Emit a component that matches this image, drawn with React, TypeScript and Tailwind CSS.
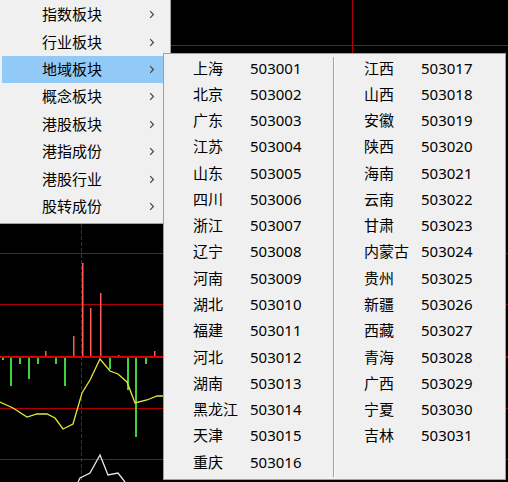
import type { ReactNode } from 'react';

const mainItems = ['指数板块', '行业板块', '地域板块', '概念板块', '港股板块', '港指成份', '港股行业', '股转成份'];

const regions: [string, string][] = [
    ['上海', '503001'], ['北京', '503002'], ['广东', '503003'], ['江苏', '503004'],
    ['山东', '503005'], ['四川', '503006'], ['浙江', '503007'], ['辽宁', '503008'],
    ['河南', '503009'], ['湖北', '503010'], ['福建', '503011'], ['河北', '503012'],
    ['湖南', '503013'], ['黑龙江', '503014'], ['天津', '503015'], ['重庆', '503016'],
    ['江西', '503017'], ['山西', '503018'], ['安徽', '503019'], ['陕西', '503020'],
    ['海南', '503021'], ['云南', '503022'], ['甘肃', '503023'], ['内蒙古', '503024'],
    ['贵州', '503025'], ['新疆', '503026'], ['西藏', '503027'], ['青海', '503028'],
    ['广西', '503029'], ['宁夏', '503030'], ['吉林', '503031'],
];

// bars around the zero line at y=357: [x, top]
const redBars: [number, number][] = [
    [45, 351], [73, 336], [82, 263], [90, 308], [100, 293], [118, 355], [154, 351], [163, 344],
];
const greenBars: [number, number][] = [
    [2, 360], [10, 386], [19, 364], [28, 379], [37, 364], [55, 364], [64, 386],
    [109, 369], [127, 390], [135, 437], [145, 364],
];

const yellow = '0,402 13,408 27,417 37,414 47,414 55,418 63,429 73,424 82,393 90,380 100,359 110,371 118,374 127,382 135,403 147,400 157,396 165,396';
const white = '78,482 80,478 90,473 100,455 108,475 118,473 125,482';

function Chevron() {
    return (
        <svg width="6" height="9" viewBox="0 0 6 9" className="shrink-0">
            <path d="M1.2 1.2 L4.4 4.5 L1.2 7.8" fill="none" stroke="#444" strokeWidth="1.2" />
        </svg>
    );
}

function Chart() {
    return (
        <svg width="508" height="482" className="block bg-black">
            {[45, 253, 304, 408, 459].map(y => (
                <line key={y} x1="0" x2="508" y1={y + 0.5} y2={y + 0.5} stroke="#b00000" strokeWidth="1" />
            ))}
            <line x1="352.5" x2="352.5" y1="0" y2="60" stroke="#b00000" strokeWidth="1" />
            <line x1="81.5" x2="81.5" y1="224" y2="482" stroke="#b80000" strokeWidth="1" strokeDasharray="4 2" />
            {redBars.map(([x, top]) => (
                <rect key={x} x={x} y={top} width="1.5" height={357 - top} fill="#ff5a5a" />
            ))}
            {greenBars.map(([x, bottom]) => (
                <rect key={x} x={x} y="357" width="2" height={bottom - 357} fill="#3fd23f" />
            ))}
            <rect x="0" y="356" width="508" height="2" fill="#d80000" />
            <polyline points={yellow} fill="none" stroke="#e6e640" strokeWidth="1.3" />
            <polyline points={white} fill="none" stroke="#e8e8e8" strokeWidth="1.3" />
        </svg>
    );
}

function Column({ rows }: { rows: [string, string][] }): ReactNode {
    return (
        <div className="flex w-[169px] flex-col">
            {rows.map(([name, code]) => (
                <div key={code} className="flex h-[26.27px] items-center pl-[29px]">
                    <span className="w-[57px]">{name}</span>
                    <span>{code}</span>
                </div>
            ))}
        </div>
    );
}

export default function App() {
    return (
        <div
            className="relative h-[482px] w-[508px] overflow-hidden bg-black text-[15px] leading-none text-black"
            style={{ fontFamily: '"Noto Sans", "Noto Sans CJK SC", sans-serif' }}
        >
            <Chart />

            <div className="absolute left-0 top-0 flex h-[224px] w-[171px] flex-col border-b border-r border-[#a0a0a0] bg-[#f0f0f0] pt-px">
                {mainItems.map((label, i) => (
                    <div
                        key={label}
                        className={`ml-[2px] flex h-[27.4px] items-center justify-between pl-[40px] pr-[15px] ${i === 2 ? 'bg-[#91c9f7]' : ''}`}
                    >
                        <span>{label}</span>
                        <Chevron />
                    </div>
                ))}
            </div>

            <div className="absolute left-[163px] top-[53px] flex h-[427px] w-[343px] border border-[#a0a0a0] bg-[#f0f0f0] pt-[1px] shadow-[1px_1px_1px_rgba(0,0,0,0.35)]">
                <Column rows={regions.slice(0, 16)} />
                <div className="my-[2px] w-[2px] border-l border-r border-l-[#a0a0a0] border-r-[#ffffff]" />
                <Column rows={regions.slice(16)} />
            </div>
        </div>
    );
}
